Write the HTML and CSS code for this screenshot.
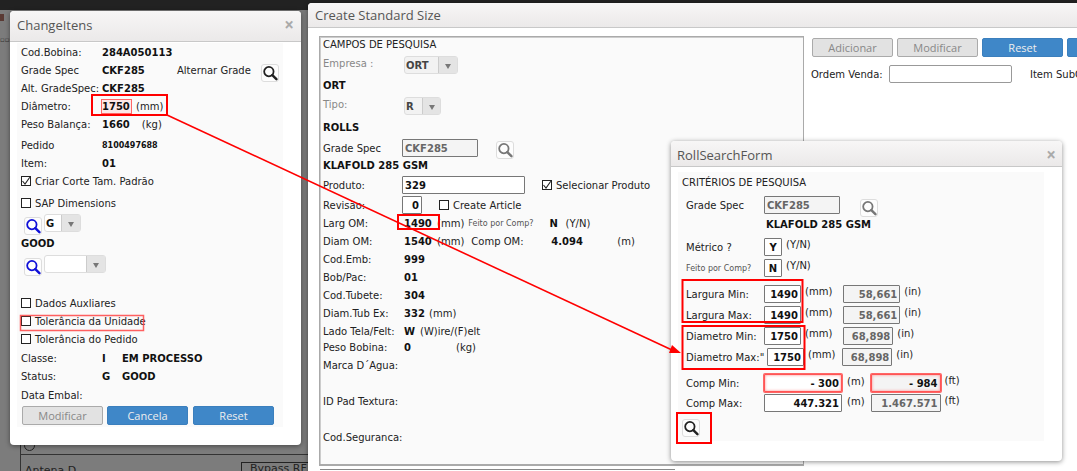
FILE: index.html
```html
<!DOCTYPE html>
<html lang="en">
<head>
  <meta charset="UTF-8" />
  <title>Create Standard Size</title>
  <link rel="stylesheet" href="styles.css">
</head>
<body>
  <svg width="0" height="0" class="defs">
    <symbol id="mag" viewBox="0 0 17 17">
      <circle cx="7.3" cy="7" r="5" fill="none" stroke="currentColor" stroke-width="1.9"/>
      <path d="M11 10.800 L15.300 15.100" stroke="currentColor" stroke-width="2.600" stroke-linecap="round"/>
    </symbol>
    <symbol id="tick" viewBox="0 0 10 10">
      <path d="M1.5 5 L4 8 L8.8 1.2" fill="none" stroke="#222" stroke-width="1.1"/>
    </symbol>
  </svg>

  <div class="topbar"></div>
  <div class="home"></div>
  <div class="dots">&#9643;&#9643;&#9643;</div>
  <div class="behind">
    <div class="radio"></div>
    <div class="antena">Antena D <span class="bypass"><i></i>Bypass RF</span></div>
  </div>

  <!-- left window -->
  <section class="win win-change">
    <header class="win-title">ChangeItens<span class="close">&times;</span></header>
    <div class="panel panel-change">
      <div class="row"><label>Cod.Bobina:</label><b>284A050113</b></div>
      <div class="row"><label>Grade Spec</label><b class="w-grade">CKF285</b><span class="alt">Alternar Grade</span>
        <button class="mag mag-alt"><svg><use href="#mag"/></svg></button></div>
      <div class="row"><label>Alt. GradeSpec:</label><b>CKF285</b></div>
      <div class="row"><label>Diâmetro:</label><b class="glow">1750</b><span class="unit">(mm)</span></div>
      <div class="row"><label>Peso Balança:</label><b>1660</b><span class="unit-kg">(kg)</span></div>
      <div class="row row-pedido"><label>Pedido</label><b class="small">8100497688</b></div>
      <div class="row"><label>Item:</label><b>01</b></div>
      <div class="row"><span class="check"><svg><use href="#tick"/></svg></span>Criar Corte Tam. Padrão</div>
      <div class="row row-sap"><span class="check"></span>SAP Dimensions</div>
      <div class="row row-sel">
        <button class="mag mag-blue"><svg><use href="#mag"/></svg></button>
        <div class="select sel-g"><span>G</span><i></i></div>
      </div>
      <div class="row row-good"><b>GOOD</b></div>
      <div class="row row-sel2">
        <button class="mag mag-blue"><svg><use href="#mag"/></svg></button>
        <div class="select sel-empty"><span></span><i></i></div>
      </div>
      <div class="row row-dados"><span class="check"></span>Dados Auxliares</div>
      <div class="row"><span class="check"></span>Tolerância da Unidade</div>
      <div class="row"><span class="check"></span>Tolerância do Pedido</div>
      <div class="row row-classe"><label>Classe:</label><b class="code">I</b><b>EM PROCESSO</b></div>
      <div class="row"><label>Status:</label><b class="code">G</b><b>GOOD</b></div>
      <div class="row row-data"><label>Data Embal:</label></div>
      <div class="btns btns-change">
        <button class="btn off">Modificar</button>
        <button class="btn on">Cancela</button>
        <button class="btn on">Reset</button>
      </div>
    </div>
  </section>

  <!-- main window -->
  <section class="win win-main">
    <header class="win-title">Create Standard Size</header>
    <div class="main-body">
      <div class="panel-search">
        <div class="row row-head">CAMPOS DE PESQUISA</div>
        <div class="row row-emp"><label class="muted">Empresa :</label><div class="select sel-ort"><span>ORT</span><i></i></div></div>
        <div class="row row-ort"><b>ORT</b></div>
        <div class="row row-tipo"><label class="muted">Tipo:</label><div class="select sel-r"><span>R</span><i></i></div></div>
        <div class="row row-rolls"><b>ROLLS</b></div>
        <div class="row row-grade"><label>Grade Spec</label><input class="field grey w-76" value="CKF285" readonly>
          <button class="mag mag-grey"><svg><use href="#mag"/></svg></button></div>
        <div class="row row-klaf"><b>KLAFOLD 285 GSM</b></div>
        <div class="row row-prod"><label>Produto:</label><input class="field w-123" value="329" readonly>
          <span class="check check-sel"><svg><use href="#tick"/></svg></span>Selecionar Produto</div>
        <div class="row row-rev"><label>Revisão:</label><input class="field w-20 right" value="0" readonly>
          <span class="check check-art"></span>Create Article</div>
        <div class="row"><label>Larg OM:</label><b class="w-larg">1490</b><span>(mm)</span><span class="tiny feito">Feito por Comp?</span><b class="yn">N</b><span>(Y/N)</span></div>
        <div class="row"><label>Diam OM:</label><b class="w-larg">1540</b><span>(mm)</span><span class="comp">Comp OM:</span><b class="w-comp">4.094</b><span>(m)</span></div>
        <div class="row"><label>Cod.Emb:</label><b>999</b></div>
        <div class="row"><label>Bob/Pac:</label><b>01</b></div>
        <div class="row"><label>Cod.Tubete:</label><b>304</b></div>
        <div class="row"><label>Diam.Tub Ex:</label><b class="w-tub">332</b><span>(mm)</span></div>
        <div class="row"><label>Lado Tela/Felt:</label><b class="w-lado">W</b><span>(W)ire/(F)elt</span></div>
        <div class="row row-peso2"><label>Peso Bobina:</label><b class="w-bob">0</b><span>(kg)</span></div>
        <div class="row row-marca"><label>Marca D´Agua:</label></div>
        <div class="row row-far"><label>ID Pad Textura:</label></div>
        <div class="row row-far"><label>Cod.Seguranca:</label></div>
      </div>
      <div class="panel-side">
        <div class="btns btns-main">
          <button class="btn off">Adicionar</button>
          <button class="btn off">Modificar</button>
          <button class="btn on">Reset</button>
          <button class="btn on"></button>
        </div>
        <div class="row row-ordem"><span class="ordem">Ordem Venda:</span><input class="field soft w-123" readonly><span class="subitem">Item SubOrdem</span></div>
      </div>
    </div>
    <div class="main-foot"></div>
  </section>

  <!-- search window -->
  <section class="win win-roll">
    <header class="win-title">RollSearchForm<span class="close">&times;</span></header>
    <div class="panel panel-roll">
      <div class="row">CRITÉRIOS DE PESQUISA</div>
      <div class="frow frow-grade"><label>Grade Spec</label><input class="field grey w-76" value="CKF285" readonly>
        <button class="mag mag-grey mag-rollgrade"><svg><use href="#mag"/></svg></button></div>
      <div class="frow frow-klaf"><b>KLAFOLD 285 GSM</b></div>
      <div class="frow frow-metric"><label>Métrico ?</label><input class="field w-16 center" value="Y" readonly><span class="note">(Y/N)</span></div>
      <div class="frow"><label class="tiny">Feito por Comp?</label><input class="field w-16 center" value="N" readonly><span class="note">(Y/N)</span></div>
      <div class="frow frow-lmin"><label>Largura Min:</label><input class="field w-36 right" value="1490" readonly><span class="note">(mm)</span><input class="field grey w-56 right in-l" value="58,661" readonly><span class="note">(in)</span></div>
      <div class="frow"><label>Largura Max:</label><input class="field w-36 right" value="1490" readonly><span class="note">(mm)</span><input class="field grey w-56 right in-l" value="58,661" readonly><span class="note">(in)</span></div>
      <div class="frow"><label>Diametro Min:</label><input class="field w-36 right" value="1750" readonly><span class="note">(mm)</span><input class="field grey w-50 right in-l" value="68,898" readonly><span class="note">(in)</span></div>
      <div class="frow"><label class="lab-max">Diametro Max:"</label><input class="field w-36 right" value="1750" readonly><span class="note">(mm)</span><input class="field grey w-50 right in-d" value="68,898" readonly><span class="note">(in)</span></div>
      <div class="frow frow-cmin"><label>Comp Min:</label><input class="field w-78 right alert" value="- 300" readonly><span class="note note-m">(m)</span><input class="field grey w-70 right alert" value="- 984" readonly><span class="note">(ft)</span></div>
      <div class="frow frow-cmax"><label>Comp Max:</label><input class="field w-78 right" value="447.321" readonly><span class="note note-m">(m)</span><input class="field grey w-70 right" value="1.467.571" readonly><span class="note">(ft)</span></div>
      <button class="mag mag-search"><svg><use href="#mag"/></svg></button>
    </div>
  </section>

  <!-- red annotations -->
  <svg class="notes" width="1077" height="471" viewBox="0 0 1077 471">
    <g fill="none" stroke="#f00" stroke-width="2">
      <rect x="92" y="95" width="75" height="20"/>
      <rect x="398" y="215" width="41" height="14"/>
      <rect x="682.500" y="280" width="120" height="42"/>
      <rect x="682.500" y="326" width="122" height="43"/>
      <rect x="677" y="413" width="34" height="30"/>
      <path d="M167 115 L672 350" stroke-width="1.6"/>
    </g>
    <path d="M681 353 L669 353 L672 345 Z" fill="#f00"/>
    <rect x="20.500" y="315.500" width="123" height="15" fill="none" stroke="#f44" stroke-width="1.500" opacity=".85"/>
  </svg>
</body>
</html>
```

FILE: styles.css
```css
* { box-sizing: border-box; }
html, body { margin: 0; height: 100%; overflow: hidden; }
body { background: #7c7c7c; font-family: "DejaVu Sans", Verdana, sans-serif; font-size: 10px; color: #222; width: 1077px; height: 471px; position: relative; }
.defs { position: absolute; }
b { color: #111; font-weight: bold; }
label { display: block; flex: none; }
.muted { color: #888; }
.tiny { font-size: 8px; color: #555; }

/* dimmed page behind the windows */
.topbar { position: absolute; left: 0; top: 0; width: 100%; height: 10px; background: #222; }
.home { position: absolute; left: -3px; top: 14px; width: 7px; height: 7px; background: #5a3a34; }
.dots { position: absolute; left: 0; top: 36px; font-size: 7px; color: #333; }
.behind { position: absolute; left: 20px; top: 440px; width: 300px; height: 31px; border-left: 1px solid #333; color: #222; }
.radio { position: absolute; left: 3px; top: 0; width: 11px; height: 11px; border: 1px solid #222; border-radius: 50%; }
.antena { position: absolute; left: -1px; top: 14px; width: 300px; border-top: 1px solid #333; padding: 9px 5px 0; font-size: 11px; }
.bypass { position: absolute; left: 221px; top: 7px; width: 90px; height: 12px; border: 1px solid #222; padding-left: 8px; line-height: 11px; white-space: nowrap; overflow: hidden; }

/* windows */
.win { position: absolute; background: #fff; border-radius: 4px; box-shadow: 0 1px 5px rgba(0,0,0,.45); }
.win-change { left: 10px; top: 11px; width: 291px; height: 434px; }
.win-main { left: 308px; top: 3px; width: 790px; height: 480px; }
.win-roll { left: 671px; top: 141px; width: 391px; height: 320px; }
.win-title { display: flex; justify-content: space-between; align-items: center; font-family: "Open Sans", sans-serif; font-size: 13px; color: #555; background: linear-gradient(#f7f6f6, #ebe9e9); border-bottom: 1px solid #c8c8c8; border-radius: 4px 4px 0 0; padding: 0 7px; height: 31px; }
.win-change .win-title { padding-bottom: 3px; }
.win-main .win-title { height: 25px; }
.win-roll .win-title { height: 26px; padding: 2px 6px 0; }
.close { font-size: 17px; color: #aaa; line-height: 1; font-weight: bold; }

.row { display: flex; align-items: center; height: 18px; white-space: nowrap; }

/* left window */
.panel-change { margin: 1px 0 0 7px; width: 266px; height: 384px; background: #fafafa; padding: 0 4px; }
.panel-change label { width: 81px; }
.w-grade { width: 75px; }
.alt { margin-right: 10px; }
.glow { box-shadow: 0 0 0 1px #f66; width: 29px; height: 13px; background: #fde8e8; line-height: 13px; }
.unit { margin-left: 5px; }
.unit-kg { margin-left: 12px; }
.small { font-size: 8px; }
.row-pedido { margin-top: 3px; }
.row-sap { margin-top: 4px; }
.row-sel { margin-top: 2px; padding-left: 3px; gap: 2px; }
.row-good { margin-top: 2px; }
.row-sel2 { margin-top: 3px; padding-left: 3px; gap: 2px; }
.row-dados { margin-top: 21px; }
.row-classe { margin-top: 1px; }
.row-data { margin-top: 1px; }
.code { width: 20px; }

.check { flex: none; width: 10px; height: 10px; border: 1px solid #222; margin-right: 4px; background: #fff; }
.check svg { display: block; width: 10px; height: 10px; margin: -1px 0 0 -1px; }

.select { display: flex; flex: none; height: 18px; border: 1px solid #ddd; border-radius: 3px; background: #fff; font-weight: bold; font-size: 10px; }
.select span { flex: 1; padding: 3px 0 0 1px; color: #444; }
.select i { position: relative; width: 19px; background: #e4e4e4; border-left: 1px solid #ccc; }
.select i::after { content: ""; position: absolute; left: 6px; top: 7px; border: 3px solid transparent; border-top: 5px solid #777; }
.sel-g { width: 37px; }
.sel-g span { color: #111; }
.sel-empty { width: 62px; }
.sel-ort { width: 54px; background: #f2f2f2; }
.sel-r { width: 37px; background: #f2f2f2; }
.sel-r i { width: 18px; }

.mag { flex: none; width: 18px; height: 18px; padding: 0; background: #fdfdfd; border: 1px solid #ddd; border-radius: 3px; color: #222; }
.mag svg { display: block; width: 16px; height: 16px; }
.mag-alt { margin-top: 5px; }
.mag-blue { color: #1010d8; margin-top: 6px; }
.mag-grey { color: #777; }

/* buttons */
.btns { display: flex; }
.btn { flex: none; width: 81px; height: 19px; padding: 0; font-family: "Open Sans", sans-serif; font-size: 11px; border-radius: 2px; }
.btn.off { color: #888; background: #e2e2e2; border: 1px solid #aaa; }
.btn.on { color: #eee; background: #3f87c8; border: 1px solid #3b7fbd; }
.btns-change { gap: 4px; margin: 2px 0 0 1px; }
.btns-change .btn:last-child { margin-left: 1px; }
.btns-main { gap: 4px; }

/* main window */
.main-body { display: flex; padding: 8px 0 0 11px; }
.panel-search { flex: none; width: 485px; height: 430px; border: 1px solid #aaa; border-bottom-width: 2px; background: #fafafa; padding: 0 3px; box-shadow: inset 1px 1px 0 #ccc; }
.panel-search label { width: 81px; }
.panel-search .field { margin-left: -2px; }
.panel-side { padding: 2px 0 0 8px; }
.row-head { height: 15px; }
.row-emp { margin-top: 4px; }
.row-ort { margin-top: 2px; }
.row-tipo { margin-top: 3px; }
.row-emp label, .row-tipo label { margin-bottom: 4px; }
.row-rolls { margin-top: 3px; }
.row-grade { margin-top: 3px; }
.row-klaf { height: 16px; }
.row-prod { margin-top: 3px; }
.row-rev { margin-top: 2px; }
.row-peso2 { height: 14px; }
.row-marca { margin-top: 2px; }
.row-far { margin-top: 18px; }
.field { flex: none; height: 18px; padding: 0 2px; border: 1px solid #777; border-radius: 1px; background: #fff; font-family: "DejaVu Sans", sans-serif; font-size: 10px; font-weight: bold; color: #111; outline: 0; }
.field.grey { background: #f4f4f4; color: #666; }
.field.soft { border-color: #999; border-radius: 2px; }
.field.right { text-align: right; }
.field.center { text-align: center; padding: 0; }
.w-16 { width: 18px; }
.w-20 { width: 20px; }
.w-36 { width: 37px; }
.w-50 { width: 50px; }
.w-56 { width: 57px; }
.w-70 { width: 70px; }
.w-76 { width: 76px; }
.w-78 { width: 78px; }
.w-123 { width: 123px; }
.row-grade .mag { margin: 3px 0 0 18px; }
.check-sel { margin-left: 17px; }
.check-art { margin-left: 17px; }
.w-larg { width: 33px; }
.feito { margin: 0 16px 0 4px; }
.yn { width: 16px; }
.comp { margin-left: 7px; width: 80px; }
.w-comp { width: 66px; }
.w-tub { width: 25px; }
.w-lado { width: 16px; }
.w-bob { width: 52px; }
.row-ordem { margin-top: 8px; margin-left: -1px; }
.ordem { width: 78px; }
.subitem { margin-left: 18px; }
.main-foot { margin: 3px 0 0 12px; width: 355px; border-top: 1px solid #888; }

/* search window */
.panel-roll { margin: 5px 0 0 7px; width: 366px; height: 269px; background: #fafafa; padding: 1px 4px; position: relative; }
.frow { display: flex; align-items: center; height: 18px; margin-top: 3px; white-space: nowrap; padding-left: 4px; }
.frow label { width: 78px; }
.frow-grade { margin-top: 5px; }
.frow-klaf { padding-left: 84px; height: 14px; }
.frow-metric { margin-top: 7px; }
.frow-lmin { margin-top: 8px; }
.frow-cmin { margin-top: 8px; }
.frow-cmax { margin-top: 2px; }
.frow .lab-max { width: 81px; }
.note { margin: -6px 0 0 4px; }
.in-l { margin-left: 11px; }
.in-d { margin-left: 7px; }
.note-m { margin: -4px 6px 0 5px; }
.mag-rollgrade { margin: 6px 0 0 20px; }
.alert { box-shadow: 0 0 0 1px #f66, inset 0 0 3px #f88; border-color: #f55; }
.field.grey.alert { color: #111; }
.mag-search { position: absolute; left: 4px; top: 247px; }

.notes { position: absolute; left: 0; top: 0; pointer-events: none; }
```
